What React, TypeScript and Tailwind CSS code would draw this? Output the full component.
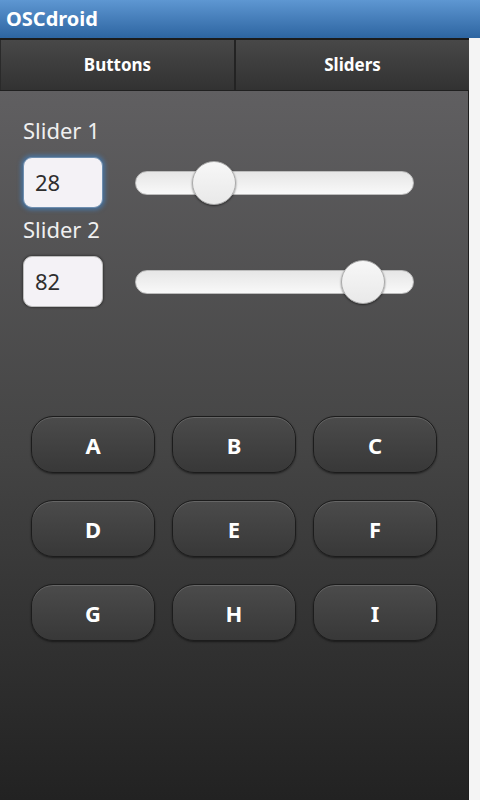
import React from 'react'

const font = { fontFamily: '"Noto Sans", "Open Sans", sans-serif' }

type SliderRowProps = {
  label: string
  value: number
  focused?: boolean
}

const SliderRow = ({ label, value, focused }: SliderRowProps) => {
  return (
    <div className="flex flex-col">
      <span className="text-[22px] leading-[30px] text-[#f0f0f0]">{label}</span>
      <div className="flex items-center mt-[12px]">
        <div
          className={`w-[80px] h-[51px] rounded-[9px] bg-[#f4f2f6] flex items-center pl-[11px] text-[22px] text-[#2e2e2e] ${
            focused
              ? 'border border-[#6f8fb0] shadow-[0_0_4px_2px_rgba(70,120,170,0.85)]'
              : 'border border-[#bdbdbd] shadow-[0_0_2px_1px_rgba(0,0,0,0.3)]'
          }`}
        >
          {value}
        </div>
        <div className="relative ml-[32px] w-[279px] h-[24px] rounded-full bg-gradient-to-b from-[#e6e6e6] to-[#f9f9f9] border border-[#bcbcbc]">
          <div
            className="absolute top-1/2 w-[44px] h-[44px] -translate-x-1/2 -translate-y-1/2 rounded-full bg-gradient-to-b from-[#f7f7f7] to-[#e9e9e9] border border-[#a9a9a9] shadow-[0_1px_2px_rgba(0,0,0,0.5)]"
            style={{ left: `${value}%` }}
          />
        </div>
      </div>
    </div>
  )
}

const keys = ['A', 'B', 'C', 'D', 'E', 'F', 'G', 'H', 'I']

const App = () => {
  return (
    <div className="w-[480px] h-[800px] flex flex-col bg-[#f4f4f4] overflow-hidden" style={font}>
      <div className="h-[38px] bg-gradient-to-b from-[#5e97d2] to-[#2d65a1] flex items-center px-[6px]">
        <span className="text-white font-bold text-[20px] leading-none">OSCdroid</span>
      </div>
      <div className="flex-1 flex flex-col w-[469px] border-t-2 border-[#1b1b1b]">
        <div className="flex h-[51px] bg-gradient-to-b from-[#484848] to-[#323232] border-b border-[#202020]">
          <div className="flex-1 flex items-center justify-center border-r-2 border-[#232323] border-l border-l-[#2a2a2a]">
            <span className="text-white font-bold text-[17px]">Buttons</span>
          </div>
          <div className="flex-1 flex items-center justify-center">
            <span className="text-white font-bold text-[17px]">Sliders</span>
          </div>
        </div>
        <div className="flex-1 flex flex-col bg-gradient-to-b from-[#605f61] via-[#454545] to-[#222222] border-r border-[#1e1e1e]">
          <div className="flex flex-col pl-[23px] pt-[24px] gap-[6px]">
            <SliderRow label="Slider 1" value={28} focused />
            <SliderRow label="Slider 2" value={82} />
          </div>
          <div className="grid grid-cols-[124px_124px_124px] gap-x-[17px] gap-y-[27px] pl-[31px] mt-[109px]">
            {keys.map((k) => (
              <button
                key={k}
                className="h-[57px] rounded-[22px] bg-gradient-to-b from-[#4b4b4b] to-[#383838] border border-[#1c1c1c] shadow-[0_1px_2px_rgba(0,0,0,0.5),inset_0_1px_0_rgba(255,255,255,0.15)] text-white font-bold text-[22px] pt-[2px]"
              >
                {k}
              </button>
            ))}
          </div>
        </div>
      </div>
    </div>
  )
}

export default App
